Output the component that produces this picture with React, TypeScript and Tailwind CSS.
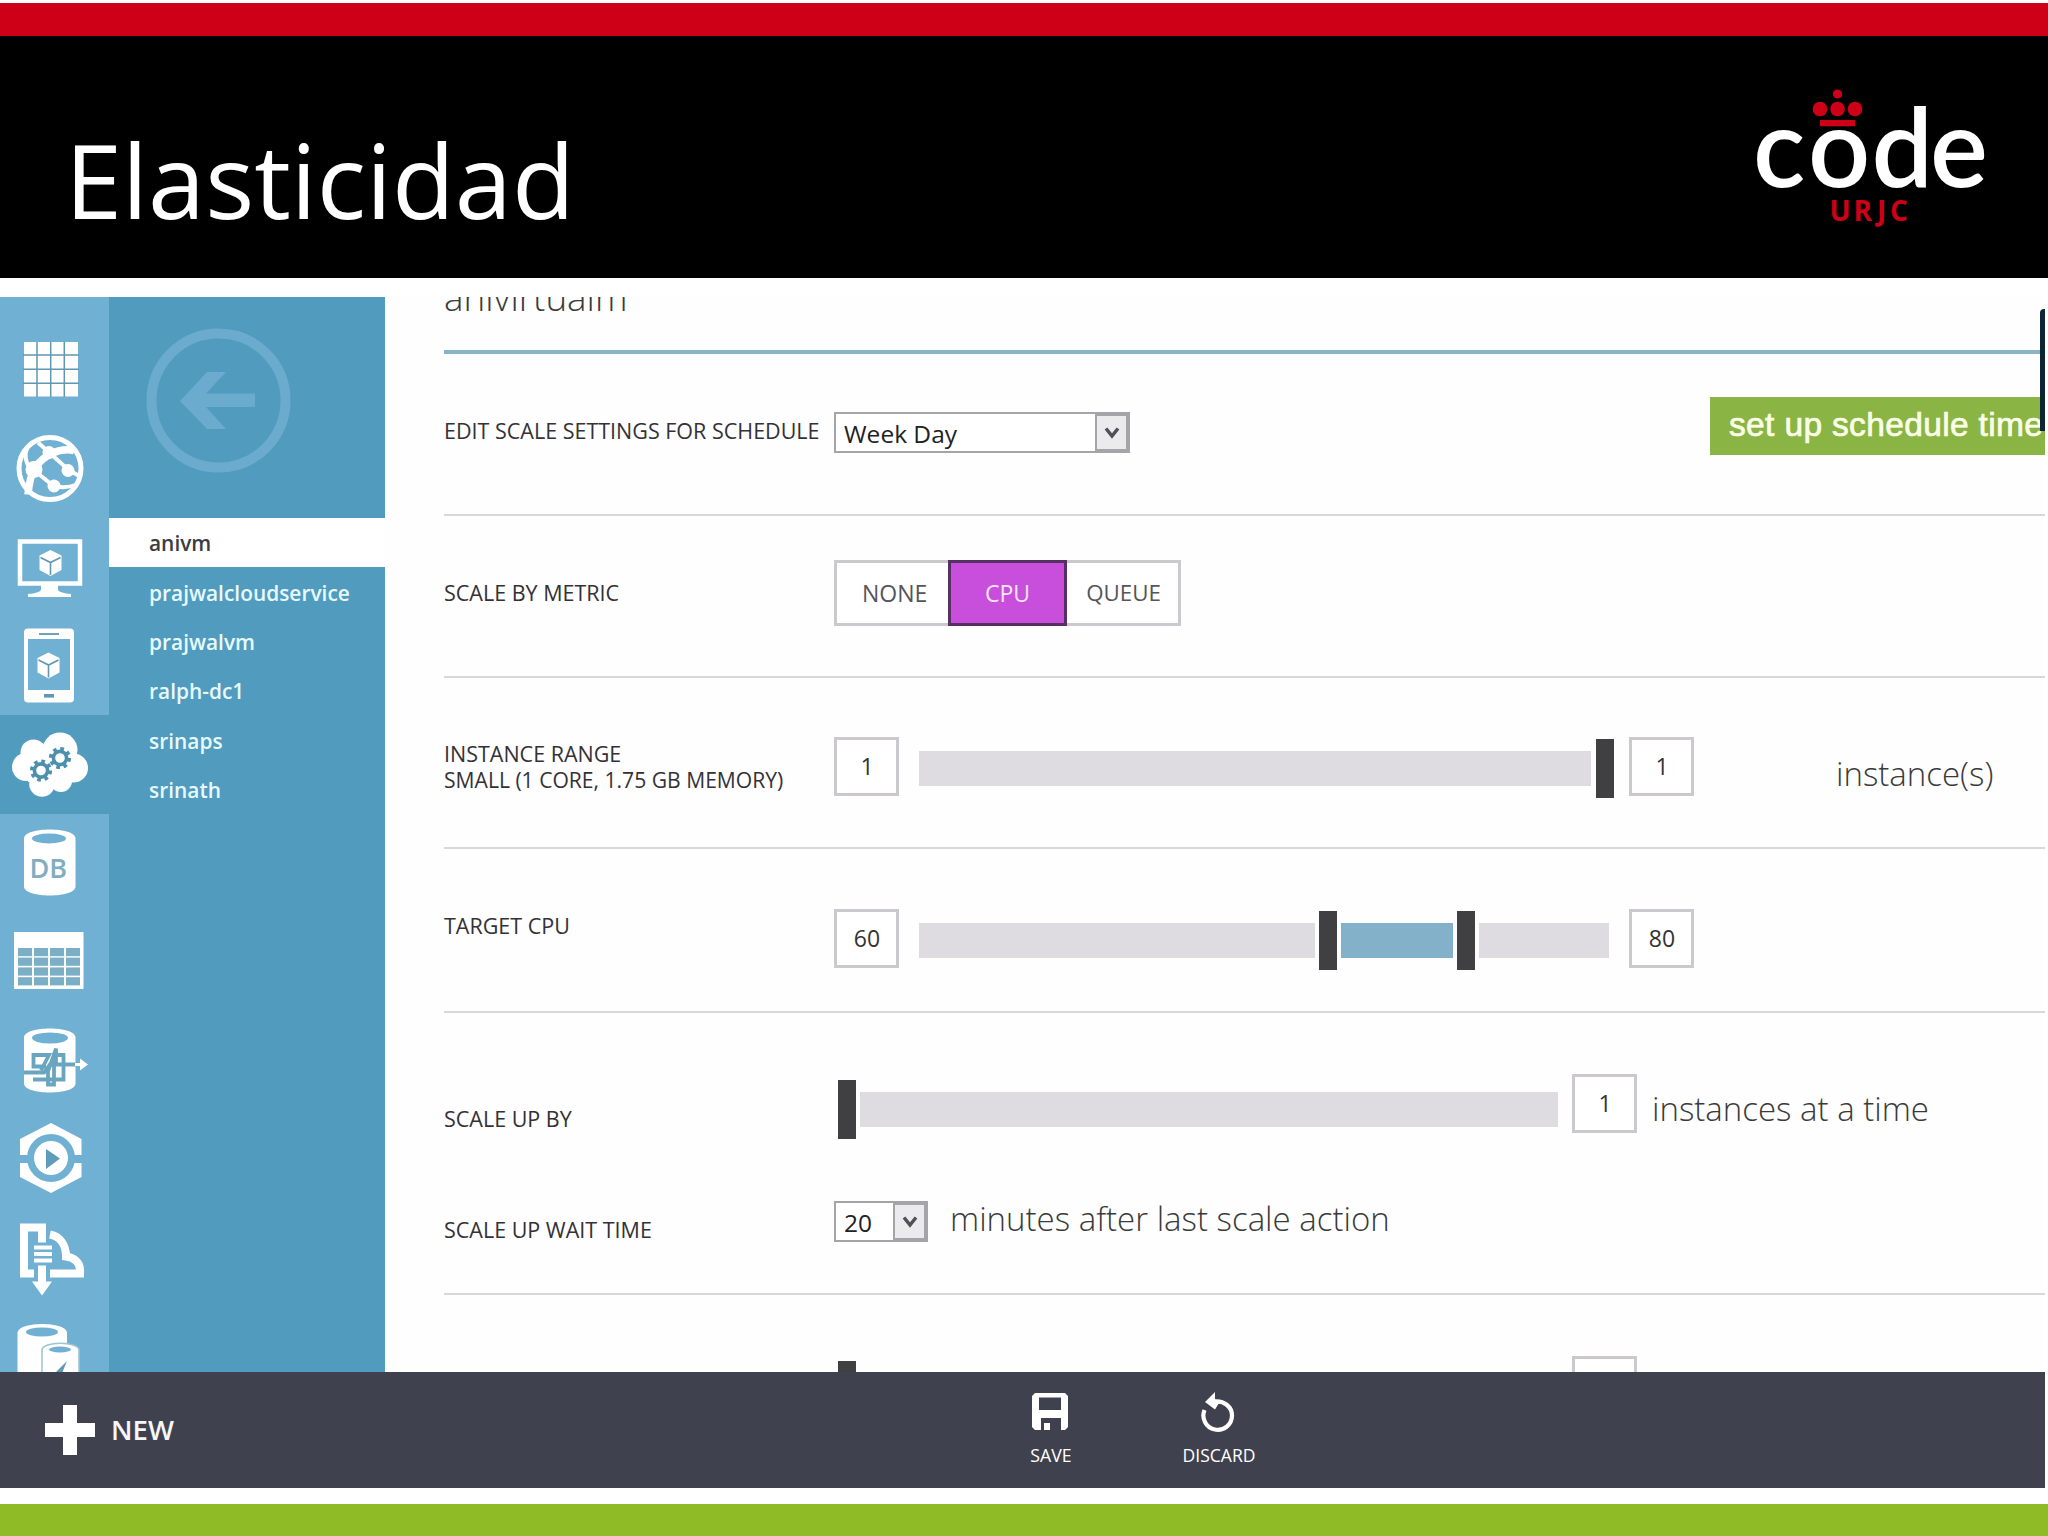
import type { ReactNode } from "react";

const RAIL = "#70b0d3";
const LINE = "#5f98b0";

function Cube({ x, y }: { x: number; y: number }) {
  return (
    <g transform={`translate(${x} ${y})`}>
      <path d="M0 -13 L11 -7.5 V7 L0 13 L-11 7 V-7.5 Z" fill="#fff" />
      <path d="M-10 -5.5 L0 -0.5 L10 -5.5 M0 -0.5 V12" fill="none" stroke={LINE} strokeWidth="1.6" />
    </g>
  );
}

function Gear({ x, y }: { x: number; y: number }) {
  return (
    <g transform={`translate(${x} ${y})`}>
      <circle r="9.3" fill="none" stroke="#4d90ae" strokeWidth="3.6" strokeDasharray="3.65 3.65" />
      <circle r="6.6" fill="#fff" stroke="#4d90ae" strokeWidth="3.6" />
    </g>
  );
}

const icons: ReactNode[] = [
  <g key="all">
    <rect x="24" y="342" width="54" height="54.5" fill="#fff" />
    <path d="M37 342V397M50.7 342V397M64.3 342V397M23 355H79M23 369.2H79M23 383.3H79" stroke={LINE} strokeWidth="1.5" />
  </g>,
  <g key="web">
    <circle cx="50" cy="468" r="31" fill="none" stroke="#fff" strokeWidth="5" />
    <g fill="none" stroke="#fff">
      <path d="M28 494 C29 482 31 474 35 467 C44 455 58 447 74 450" strokeWidth="7.5" />
      <path d="M38 442 L68 469 L80 476" strokeWidth="4" />
      <path d="M33 469 L53 485 Q64 489 77 484" strokeWidth="4" />
      <path d="M27 448 Q23 458 30 468" strokeWidth="4" />
    </g>
    <g fill="#fff">
      <circle cx="34" cy="469" r="8.5" />
      <circle cx="68" cy="470" r="6.5" />
      <circle cx="54" cy="485.5" r="6.5" />
      <circle cx="49" cy="452" r="6.5" />
    </g>
  </g>,
  <g key="vm">
    <rect x="20" y="541.5" width="60" height="42" fill="none" stroke="#fff" strokeWidth="4.5" />
    <path d="M41 585H58V590Q60 593 71 594V597H28V594Q39 593 41 590Z" fill="#fff" />
    <Cube x={50.5} y={563} />
  </g>,
  <g key="mobile">
    <rect x="24" y="628" width="50" height="74" rx="4" fill="#fff" />
    <rect x="28" y="638.5" width="42" height="51" fill={RAIL} />
    <path d="M39 633.5H59" stroke={LINE} strokeWidth="1.8" />
    <rect x="44" y="693.5" width="10" height="3.6" fill={LINE} />
    <Cube x={48.5} y={665} />
  </g>,
  <g key="cloud">
    <g fill="#fff">
      <circle cx="26" cy="767" r="14" />
      <circle cx="33.5" cy="752.5" r="13" />
      <circle cx="60" cy="750" r="17.5" />
      <circle cx="73.5" cy="768" r="14.5" />
      <circle cx="42" cy="784" r="12.8" />
      <circle cx="61" cy="781" r="11" />
      <rect x="28" y="752" width="44" height="30" />
    </g>
    <Gear x={41} y={770.5} />
    <Gear x={60} y={758} />
  </g>,
  <g key="db">
    <path d="M24 838C24 826 75.500 826 75.500 838V886C75.500 898 24 898 24 886Z" fill="#fff" />
    <ellipse cx="49" cy="838" rx="17" ry="5" fill={RAIL} />
    <text x="29.500" y="877.500" fontSize="27" fill="#80adc0" fontFamily="Open Sans" fontWeight="600">DB</text>
  </g>,
  <g key="table">
    <rect x="14" y="932" width="69.500" height="57" fill="#fff" />
    <g fill="#7bafc6">
      {[948, 957.6, 967.4, 977.2].map((y) => [18, 34, 50, 66].map((x) => <rect key={`${x}-${y}`} x={x} y={y} width="14" height="8.200" />))}
    </g>
  </g>,
  <g key="hdinsight">
    <path d="M24 1037C24 1025 75.500 1025 75.500 1037V1083C75.500 1095 24 1095 24 1083Z" fill="#fff" />
    <ellipse cx="50" cy="1037.500" rx="18" ry="5.500" fill={RAIL} />
    <g fill="none" stroke="#6aa5c0" strokeWidth="3.800">
      <path d="M24 1072H44L50 1064H76" />
      <path d="M46 1066H33.500V1054.500H49L41 1070" />
      <path d="M33 1079H63.500V1054.500H54V1084H48V1071L56 1048V1064" />
    </g>
    <path d="M75 1062.500H80V1058L88 1064L80 1070V1065.500H75Z" fill="#fff" />
  </g>,
  <g key="media">
    <path d="M51 1123L81.500 1139V1177L51 1193L20 1177V1139Z" fill="#fff" />
    <rect x="18" y="1155" width="66" height="8" fill={RAIL} />
    <circle cx="51" cy="1158" r="24" fill={RAIL} />
    <circle cx="51" cy="1158" r="17" fill="#fff" />
    <path d="M46 1149L60 1158.500L46 1169Z" fill="#5d9cbb" />
  </g>,
  <g key="import">
    <path d="M42 1242V1227H24V1273H34" fill="none" stroke="#fff" strokeWidth="8" />
    <path d="M50 1234C60 1236 66 1244 66 1256C74 1257 80 1262 80 1269V1273H50" fill="none" stroke="#fff" strokeWidth="8" />
    <path d="M34 1247H52M34 1253.500H52M34 1260H52" stroke="#fff" strokeWidth="4" />
    <path d="M38 1265H46V1281H52L42 1295L32 1281H38Z" fill="#fff" />
  </g>,
  <g key="cache">
    <path d="M17.500 1333C17.500 1321 67 1321 67 1333V1400H17.500Z" fill="#fff" />
    <ellipse cx="42" cy="1332" rx="16" ry="4.500" fill={RAIL} />
    <path d="M42 1350C42 1341 79 1341 79 1350V1400H42Z" fill="#fff" stroke="#9cc3d4" strokeWidth="1.500" />
    <ellipse cx="60" cy="1349.500" rx="11" ry="3" fill={RAIL} />
    <path d="M67 1361L55 1373H62Z" fill={LINE} />
  </g>,
];

function Rail() {
  return (
    <nav className="flex w-[109px] shrink-0 flex-col overflow-hidden bg-[#70b0d3] pt-[24px]">
      {icons.map((icon, i) => (
        <div key={i} className={i === 4 ? "h-[98.5px] shrink-0 bg-[#519bbf]" : "h-[98.5px] shrink-0"}>
          <svg className="block h-full w-full" viewBox={`0 ${321 + i * 98.5} 109 98.5`}>
            {icon}
          </svg>
        </div>
      ))}
    </nav>
  );
}

function SubNav() {
  const names = ["anivm", "prajwalcloudservice", "prajwalvm", "ralph-dc1", "srinaps", "srinath"];
  return (
    <aside className="w-[276px] shrink-0 bg-[#519bbf]">
      <div className="h-[221px] pt-[31px] pl-[37px]">
        <svg className="h-[145px] w-[145px]" viewBox="0 0 145 145">
          <circle cx="72.500" cy="72.500" r="67" fill="none" stroke="#6bacce" strokeWidth="10" />
          <path d="M34 73L61 44H80L60 65.500H109V79H60L80 101H61Z" fill="#6bacce" />
        </svg>
      </div>
      <ul>
        {names.map((n, i) => (
          <li
            key={n}
            className={
              i === 0
                ? "flex h-[49.3px] items-center bg-white pt-[3px] pl-[40px] text-[20.9px] font-semibold text-[#3c3c44]"
                : "flex h-[49.3px] items-center pt-[3px] pl-[40px] text-[20.9px] font-semibold text-[#e6fafd]"
            }
          >
            {n}
          </li>
        ))}
      </ul>
    </aside>
  );
}

function Label({ children, className }: { children: ReactNode; className: string }) {
  return <div className={`w-[390px] shrink-0 text-[21.5px] leading-[26px] whitespace-nowrap text-[#333136] ${className}`}>{children}</div>;
}

function Select({ value, className }: { value: string; className: string }) {
  return (
    <div className={`flex h-[41px] shrink-0 border-2 border-[#a5a4a8] bg-white text-[24.5px] text-[#222] ${className}`}>
      <span className="flex-1 pl-[8px] leading-[40px]">{value}</span>
      <span className="flex w-[33px] items-center justify-center border-2 border-[#a5a4a8] bg-[#ebeaec]">
        <svg className="h-[12px] w-[16px]" viewBox="0 0 16 12">
          <path d="M2 1.500L8 9L14 1.500" fill="none" stroke="#505055" strokeWidth="3.500" />
        </svg>
      </span>
    </div>
  );
}

function NumberBox({ value, className }: { value: string; className: string }) {
  return (
    <div className={`flex h-[59px] w-[65px] shrink-0 items-center justify-center border-[3px] border-[#cbc9cd] bg-white pl-[1px] text-[23px] text-[#333] ${className}`}>
      {value}
    </div>
  );
}

function Handle() {
  return <div className="h-[59px] w-[18px] shrink-0 bg-[#403f42]" />;
}

function Hint({ children, className }: { children: ReactNode; className: string }) {
  return <div className={`text-[33px] leading-[40px] font-light whitespace-nowrap text-[#3a3a3a] ${className}`}>{children}</div>;
}

function Settings() {
  return (
    <main className="relative min-w-0 flex-1 overflow-hidden bg-[#fefefe] pl-[59px]">
      <div className="flex h-[57px] items-start border-b-4 border-[#8ab5c8]">
        <div className="-mt-[20px] h-[40px] text-[36.8px] leading-[40px] font-light text-[#3a3a3a]">anivirtualm</div>
      </div>

      <section className="flex h-[162px] items-start border-b-2 border-[#d9d7dc]">
        <Label className="pt-[64px]">EDIT SCALE SETTINGS FOR SCHEDULE</Label>
        <Select value="Week Day" className="mt-[58px] w-[296px]" />
        <div className="mt-[43px] ml-auto h-[58px] w-[335px] shrink-0 overflow-hidden bg-[#8ab545] pl-[19px] font-['Liberation_Sans',sans-serif] text-[33.5px] leading-[55px] tracking-[0.35px] whitespace-nowrap text-[#fbffe8] [-webkit-text-stroke:0.7px_#fbffe8]">
          set up schedule time
        </div>
      </section>

      <section className="flex h-[162px] items-start border-b-2 border-[#d9d7dc]">
        <Label className="pt-[64px]">SCALE BY METRIC</Label>
        <div className="mt-[44px] flex h-[66px] w-[347px] border-[3px] border-[#cbc9cd] bg-white text-[23px] text-[#55555a]">
          <span className="w-[111px] pl-[25px] leading-[60px]">NONE</span>
          <span className="-my-[3px] w-[119px] border-[3px] border-[#553060] bg-[#c74fdb] text-center leading-[60px] text-[#fbe6ff]">CPU</span>
          <span className="flex-1 pl-[2px] text-center text-[22.3px] leading-[60px]">QUEUE</span>
        </div>
      </section>

      <section className="flex h-[171px] items-start border-b-2 border-[#d9d7dc]">
        <Label className="pt-[63px]">
          INSTANCE RANGE
          <div className="text-[21.1px]">SMALL (1 CORE, 1.75 GB MEMORY)</div>
        </Label>
        <NumberBox value="1" className="mt-[59px]" />
        <div className="mt-[61px] ml-[20px] flex w-[710px] items-center gap-[5px]">
          <div className="h-[35px] w-[672px] bg-[#dedce0]" />
          <Handle />
        </div>
        <NumberBox value="1" className="mt-[59px]" />
        <Hint className="mt-[76px] ml-[142px] text-[32.7px]">instance(s)</Hint>
      </section>

      <section className="flex h-[164px] items-start border-b-2 border-[#d9d7dc]">
        <Label className="pt-[64px]">TARGET CPU</Label>
        <NumberBox value="60" className="mt-[60px]" />
        <div className="mt-[62px] ml-[20px] flex w-[710px] items-center gap-[4px]">
          <div className="h-[35px] w-[396px] bg-[#dedce0]" />
          <Handle />
          <div className="h-[35px] w-[112px] bg-[#82b1c9]" />
          <Handle />
          <div className="h-[35px] w-[130px] bg-[#dedce0]" />
        </div>
        <NumberBox value="80" className="mt-[60px]" />
      </section>

      <section className="h-[282px] border-b-2 border-[#d9d7dc]">
        <div className="flex h-[167px] items-start">
          <Label className="pt-[93px]">SCALE UP BY</Label>
          <div className="mt-[67px] ml-[4px] flex w-[734px] items-center gap-[4px]">
            <Handle />
            <div className="h-[35px] w-[698px] bg-[#dedce0]" />
          </div>
          <NumberBox value="1" className="mt-[61px]" />
          <Hint className="mt-[76px] ml-[15px]">instances at a time</Hint>
        </div>
        <div className="flex items-start">
          <Label className="pt-[37px]">SCALE UP WAIT TIME</Label>
          <Select value="20" className="mt-[21px] w-[94px]" />
          <Hint className="mt-[19px] ml-[22px]">minutes after last scale action</Hint>
        </div>
      </section>

      <section className="flex h-[167px] items-start pl-[394px]">
        <div className="mt-[66px] w-[734px]">
          <Handle />
        </div>
        <NumberBox value="" className="mt-[61px]" />
      </section>

      <div className="absolute top-[12px] right-0 h-[122px] w-[5px] rounded-tl-sm bg-[#0c2634]" />
    </main>
  );
}

function CommandBar() {
  return (
    <footer className="flex h-[116px] w-[2045px] bg-[#3f424e] text-white">
      <div className="flex w-[999px] items-center gap-[16px] pl-[45px]">
        <svg className="h-[50px] w-[50px]" viewBox="0 0 50 50">
          <path d="M18 0H32V18H50V32H32V50H18V32H0V18H18Z" fill="#fff" />
        </svg>
        <span className="text-[27.5px] font-semibold text-[#f4f6f8]">NEW</span>
      </div>
      <div className="flex w-[102px] flex-col items-center pt-[21px]">
        <svg className="h-[37px] w-[36px]" viewBox="0 0 36 37">
          <path fillRule="evenodd" d="M3 0H33L36 3V34L33 37H29V25H9V37H3L0 34V3ZM7 4.500V17H29V4.500ZM12 30H18V37H12Z" fill="#fff" />
        </svg>
        <span className="mt-[13px] ml-[2px] text-[17.7px] leading-[24px]">SAVE</span>
      </div>
      <div className="flex w-[234px] flex-col items-center pt-[20px]">
        <svg className="h-[40px] w-[36px]" viewBox="1200 1392 36 40">
          <path d="M1214 1401.500C1224 1400 1232 1407 1232 1415.500A14.300 14.300 0 1 1 1204.500 1410" fill="none" stroke="#fff" strokeWidth="4.200" />
          <path d="M1205 1402L1215 1392V1399L1219 1403L1215 1409.500Z" fill="#fff" />
        </svg>
        <span className="mt-[11px] ml-[2px] text-[17.5px] leading-[24px]">DISCARD</span>
      </div>
    </footer>
  );
}

function Logo() {
  return (
    <svg className="h-[150px] w-[248px]" viewBox="1750 80 248 150">
      <g fill="#ce0017">
        <circle cx="1837.500" cy="94" r="4.600" />
        <circle cx="1820" cy="109" r="7.300" />
        <circle cx="1837.500" cy="109" r="7.300" />
        <circle cx="1855" cy="109" r="7.300" />
        <rect x="1820" y="120" width="35" height="6.300" />
        <text x="1829.500 1853.500 1877 1890" y="221" fontSize="28" fontWeight="700" fontFamily="Open Sans">URJC</text>
      </g>
      <text x="1753 1808 1871.5 1930" y="187" fontSize="109" fontWeight="600" fill="#fff" fontFamily="Lato">code</text>
    </svg>
  );
}

export default function App() {
  return (
    <div className="flex h-[1536px] w-[2048px] flex-col overflow-hidden bg-white font-['Open_Sans',sans-serif]">
      <div className="mt-[3px] h-[33px] shrink-0 bg-[#ce0017]" />
      <header className="flex h-[242px] shrink-0 items-start justify-between bg-black pr-[50px] pl-[65px]">
        <h1 className="mt-[73px] text-[102.8px] leading-[140px] text-white">Elasticidad</h1>
        <div className="mt-[44px]">
          <Logo />
        </div>
      </header>
      <div className="mt-[19px] flex h-[1075px] w-[2045px] shrink-0 overflow-hidden">
        <Rail />
        <SubNav />
        <Settings />
      </div>
      <CommandBar />
      <div className="mt-auto h-[32px] shrink-0 bg-[#8fbb27]" />
    </div>
  );
}
